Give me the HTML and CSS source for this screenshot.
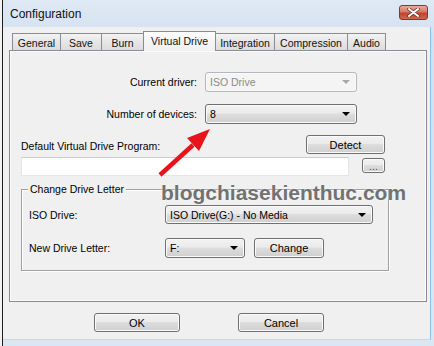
FILE: index.html
```html
<!DOCTYPE html>
<html lang="en">
<head>
  <meta charset="UTF-8" />
  <title>Configuration</title>
  <link rel="stylesheet" href="styles.css">
</head>
<body>
  <div class="screen">
    <div class="backdrop"></div>
    <div class="window">
      <div class="titlebar">
        <span class="title">Configuration</span>
        <span class="close">
          <svg width="13" height="9" viewBox="0 0 13 9">
            <path d="M2 1 L11 8 M11 1 L2 8" stroke="#6b2a22" stroke-width="3.4" stroke-linecap="round"/>
            <path d="M2 1 L11 8 M11 1 L2 8" stroke="#ffffff" stroke-width="2" stroke-linecap="round"/>
          </svg>
        </span>
      </div>

      <div class="client">
        <div class="tabs">
          <div class="tab tab-general">General</div>
          <div class="tab tab-save">Save</div>
          <div class="tab tab-burn">Burn</div>
          <div class="tab tab-virtual active">Virtual Drive</div>
          <div class="tab tab-integration">Integration</div>
          <div class="tab tab-compression">Compression</div>
          <div class="tab tab-audio">Audio</div>
        </div>

        <div class="panel">
          <div class="driver-grid">
            <span class="label-right">Current driver:</span>
            <div class="combo combo-driver disabled">ISO Drive<span class="caret"></span></div>
            <span class="label-right">Number of devices:</span>
            <div class="combo combo-driver">8<span class="caret"></span></div>
          </div>

          <div class="program-row">
            <span class="program-label">Default Virtual Drive Program:</span>
            <button class="btn btn-detect">Detect</button>
          </div>

          <div class="path-row">
            <div class="textbox"></div>
            <button class="btn btn-browse">...</button>
          </div>

          <div class="group">
            <span class="group-label">Change Drive Letter</span>
            <div class="group-grid">
              <span>ISO Drive:</span>
              <div class="combo combo-iso">ISO Drive(G:) - No Media<span class="caret"></span></div>
              <span>New Drive Letter:</span>
              <div class="letter-row">
                <div class="combo combo-letter">F:<span class="caret"></span></div>
                <button class="btn btn-change">Change</button>
              </div>
            </div>
          </div>
        </div>

        <div class="dialog-buttons">
          <button class="btn btn-dialog">OK</button>
          <button class="btn btn-dialog">Cancel</button>
        </div>
      </div>
    </div>

    <svg class="pointer" width="434" height="346" viewBox="0 0 434 346">
      <line x1="160" y1="175" x2="193" y2="145" stroke="#e8141b" stroke-width="4.5"/>
      <polygon points="210,129 187,138 199,151" fill="#e8141b"/>
    </svg>
    <div class="watermark">blogchiasekienthuc.com</div>
  </div>
</body>
</html>
```

FILE: styles.css
```css
body {
  margin: 0;
  font-family: 'Liberation Sans', Arial, sans-serif;
  font-size: 10.5px;
  color: #000;
}

.screen {
  position: relative;
  display: flex;
  width: 434px;
  height: 346px;
  overflow: hidden;
  background: #f4f4f4;
}

.backdrop {
  width: 2px;
  background: #f2f2f2;
  border-right: 1px solid #1e1e1e;
}

.window {
  width: 431px;
  display: flex;
  flex-direction: column;
  background: linear-gradient(to bottom, #dfe9f5, #d3e0ef 40px, #dbe6f3);
}

.titlebar {
  height: 27px;
  display: flex;
  align-items: center;
  justify-content: space-between;
  padding: 0 6px 0 7px;
}

.title {
  font-size: 12px;
  color: #111;
}

.close {
  width: 29px;
  height: 15px;
  margin-top: -2px;
  box-sizing: border-box;
  border: 1px solid #7d3a30;
  border-radius: 3px;
  background: linear-gradient(to bottom, #e9a99b, #d57a68 45%, #c1432c 55%, #d0654c);
  display: flex;
  align-items: center;
  justify-content: center;
}

.client {
  flex: 1;
  margin: 0 3px 6px 0;
  padding: 4px 3px 0 6px;
  background: #f0f0f0;
  border-right: 1px solid #8cc0ea;
  border-bottom: 1px solid #c9d6e8;
}

/* tabs */
.tabs {
  display: flex;
  align-items: flex-end;
  height: 19px;
  margin-left: 3px;
  position: relative;
  z-index: 1;
}

.tab {
  box-sizing: border-box;
  height: 17px;
  margin-left: -1px;
  border: 1px solid #898c95;
  border-bottom: none;
  background: linear-gradient(to bottom, #f3f3f3, #e6e6e6 50%, #dcdcdc);
  display: flex;
  justify-content: center;
  align-items: center;
  padding-top: 1px;
  color: #111;
}

.tab-general { width: 49px; margin-left: 0; }
.tab-save { width: 42px; }
.tab-burn { width: 43px; }
.tab-virtual { width: 73px; }
.tab-integration { width: 60px; }
.tab-compression { width: 74px; }
.tab-audio { width: 39px; }

.tab.active {
  height: 20px;
  margin-bottom: -1px;
  background: linear-gradient(to bottom, #ffffff, #f6f6f6 40%, #f0f0f0);
  padding-bottom: 3px;
}

.panel {
  box-sizing: border-box;
  height: 252px;
  border: 1px solid #898c95;
  box-shadow: inset 0 0 0 1px #fbfbfb;
  background: #f0f0f0;
  padding-left: 11px;
}

/* controls */
.btn,
.combo {
  box-sizing: border-box;
  font-family: 'Liberation Sans', Arial, sans-serif;
  font-size: 10.5px;
  color: #000;
  border: 1px solid #707070;
  border-radius: 3px;
  background: linear-gradient(to bottom, #f2f2f2, #ebebeb 45%, #dddddd 50%, #cfcfcf);
  box-shadow: inset 0 0 0 1px #fafafa;
  padding: 0;
}

.combo {
  position: relative;
  display: flex;
  align-items: center;
  padding-left: 4px;
}

.caret {
  position: absolute;
  right: 6px;
  top: 50%;
  margin-top: -2px;
  width: 0;
  height: 0;
  border-left: 4px solid transparent;
  border-right: 4px solid transparent;
  border-top: 4px solid #000;
}

.combo.disabled {
  border-color: #b4b8bb;
  background: #f4f4f4;
  color: #8a8a8a;
}

.combo.disabled .caret {
  border-top-color: #a8a8a8;
}

.driver-grid {
  display: grid;
  grid-template-columns: 176px 152px;
  grid-auto-rows: 20px;
  column-gap: 8px;
  row-gap: 12px;
  align-items: center;
  margin-top: 21px;
}

.label-right {
  text-align: right;
}

.combo-driver {
  height: 20px;
}

.program-row {
  display: flex;
  align-items: flex-end;
  width: 364px;
  height: 19px;
  margin-top: 11px;
}

.program-label {
  line-height: 13px;
  margin-bottom: 1px;
}

.btn-detect {
  margin-left: auto;
  width: 79px;
  height: 19px;
  font-size: 11px;
}

.path-row {
  display: flex;
  align-items: flex-start;
  margin-top: 3px;
}

.textbox {
  box-sizing: border-box;
  width: 328px;
  height: 19px;
  background: #fff;
  border: 1px solid #e2e6ea;
  border-top-color: #c9ced4;
}

.btn-browse {
  width: 23px;
  height: 15px;
  margin: 1px 0 0 13px;
  line-height: 10px;
  color: #555;
}

.group {
  position: relative;
  box-sizing: border-box;
  width: 368px;
  height: 82px;
  margin-top: 13px;
  padding: 15px 0 0 7px;
  border: 1px solid #a0a0a0;
  box-shadow: 1px 1px 0 #fff, inset 1px 1px 0 #fff;
}

.group-label {
  position: absolute;
  left: 6px;
  top: -7px;
  padding: 0 2px;
  background: #f0f0f0;
  line-height: 13px;
}

.group-grid {
  display: grid;
  grid-template-columns: 136px auto;
  align-items: center;
  row-gap: 14px;
}

.combo-iso {
  width: 208px;
  height: 19px;
}

.letter-row {
  display: flex;
  gap: 9px;
}

.combo-letter {
  width: 80px;
  height: 20px;
}

.btn-change {
  width: 70px;
  height: 20px;
  font-size: 11px;
}

.dialog-buttons {
  display: flex;
  gap: 58px;
  margin: 11px 0 0 85px;
}

.btn-dialog {
  width: 86px;
  height: 19px;
  font-size: 11px;
}

/* overlays from the screenshot */
.pointer {
  position: absolute;
  left: 0;
  top: 0;
  pointer-events: none;
}

.watermark {
  position: absolute;
  left: 161px;
  top: 182px;
  font-family: 'Liberation Sans', Arial, sans-serif;
  font-weight: bold;
  font-size: 21px;
  line-height: 21px;
  color: #727272;
  text-shadow: 0 0 2px #fff;
}
```
